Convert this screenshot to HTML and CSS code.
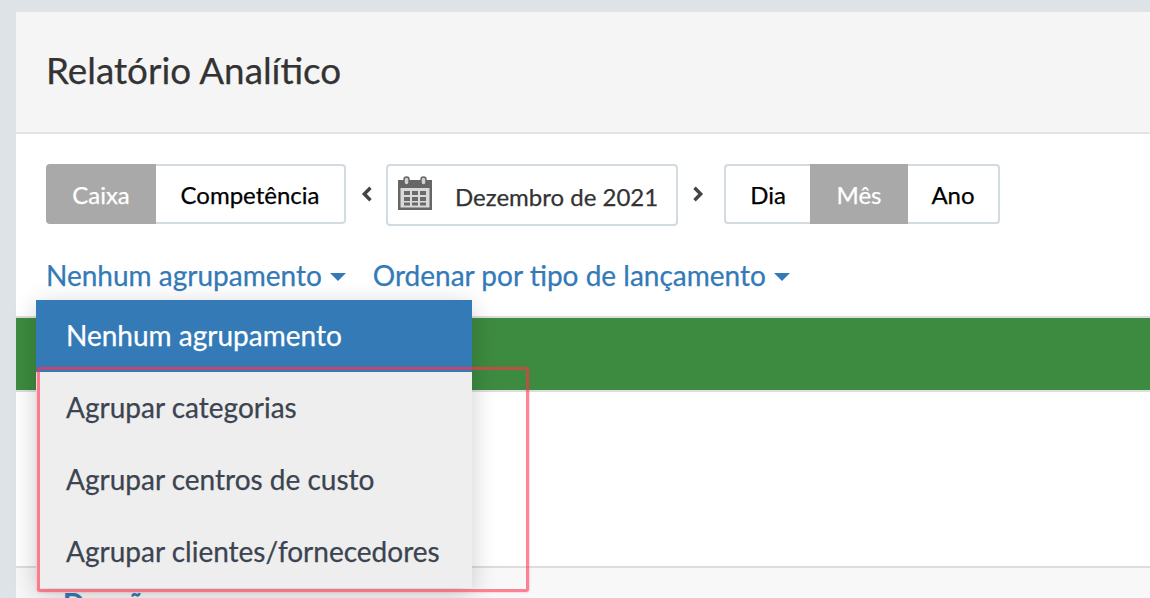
FILE: index.html
```html
<!DOCTYPE html>
<html lang="pt-BR">
<head>
<meta charset="utf-8">
<title>Relatório Analítico</title>
<link rel="stylesheet" href="styles.css">
</head>
<body>
<main class="card">
  <header class="card-head"><h1 class="title">Relatório Analítico</h1></header>
  <section class="toolbar">
    <div class="btn-group">
      <button class="seg seg-caixa active">Caixa</button>
      <button class="seg seg-comp">Competência</button>
    </div>
    <span class="arrow arrow-left">
      <svg width="12" height="16" viewBox="0 0 12 16"><path d="M9.500 1.800 3.300 8l6.200 6.200" fill="none" stroke="#444" stroke-width="3.400"/></svg>
    </span>
    <div class="date-box">
      <svg class="cal" width="36" height="34" viewBox="0 0 36 34">
        <path d="M1 4h34v30H1z" fill="#666"/>
        <path d="M3.500 12h29v19.500h-29z" fill="#d9d9d9"/>
        <rect x="7" y="1" width="5" height="8" rx="2.500" fill="#d0d0d0" stroke="#666" stroke-width="1.500"/>
        <rect x="24" y="1" width="5" height="8" rx="2.500" fill="#d0d0d0" stroke="#666" stroke-width="1.500"/>
        <path d="M7 15h6v4H7zM15 15h6v4h-6zM23 15h6v4h-6zM7 21h6v4H7zM15 21h6v4h-6zM23 21h6v4h-6zM7 26.500h6v3H7zM15 26.500h6v3h-6zM23 26.500h6v3h-6z" fill="#6a6a6a"/>
      </svg>
      <span class="date-text">Dezembro de 2021</span>
    </div>
    <span class="arrow arrow-right">
      <svg width="12" height="16" viewBox="0 0 12 16"><path d="M2.500 1.800 8.700 8l-6.200 6.200" fill="none" stroke="#444" stroke-width="3.400"/></svg>
    </span>
    <div class="btn-group">
      <button class="seg seg-dia">Dia</button>
      <button class="seg seg-mes active">Mês</button>
      <button class="seg seg-ano">Ano</button>
    </div>
  </section>
  <nav class="filters">
    <a class="filter">Nenhum agrupamento<i class="caret"></i></a>
    <a class="filter">Ordenar por tipo de lançamento<i class="caret"></i></a>
  </nav>
  <div class="green-bar"></div>
  <div class="blank"></div>
  <div class="footer-row"><span class="row-label">Doações</span></div>
</main>
<ul class="menu">
  <li class="menu-item selected">Nenhum agrupamento</li>
  <li class="menu-item">Agrupar categorias</li>
  <li class="menu-item">Agrupar centros de custo</li>
  <li class="menu-item">Agrupar clientes/fornecedores</li>
</ul>
<div class="highlight"></div>
</body>
</html>
```
FILE: styles.css
```css
* { box-sizing: border-box; }
html, body { margin: 0; height: 598px; overflow: hidden; }
body {
  position: relative;
  background: #dee3e7;
  padding: 12px 0 0 16px;
  font-family: Lato, "Open Sans", sans-serif;
  color: #333;
  -webkit-text-stroke: .25px;
}
.card {
  background: #fff;
  border-radius: 3px 0 0 0;
  height: 700px;
}
.card-head {
  height: 122px;
  background: #f5f5f5;
  border-bottom: 2px solid #e4e4e4;
  padding: 0 30px;
  display: flex;
  align-items: center;
}
.title {
  margin: 0 0 5px;
  font-size: 36.8px;
  font-weight: 400;
  color: #333;
}
.toolbar {
  display: flex;
  align-items: flex-start;
  padding: 30px 0 0 30px;
}
.btn-group { display: flex; }
.seg {
  height: 60px;
  font: 400 24px Lato, sans-serif;
  color: #000;
  background: #fff;
  border: 2px solid #d2dce0;
  padding: 0;
  -webkit-text-stroke: .25px;
}
.seg.active { background: #a9a9a9; border-color: #a9a9a9; color: #fff; }
.seg-caixa { width: 110px; border-radius: 4px 0 0 4px; }
.seg-comp { width: 190px; border-left: 0; border-radius: 0 4px 4px 0; }
.seg-dia { width: 86px; border-right: 0; border-radius: 4px 0 0 4px; }
.seg-mes { width: 98px; }
.seg-ano { width: 92px; border-left: 0; border-radius: 0 4px 4px 0; }
.arrow {
  width: 40px;
  height: 60px;
  display: flex;
  align-items: center;
  justify-content: center;
}
.arrow-left { padding-left: 2px; }
.arrow-right { width: 46px; padding-right: 6px; }
.date-box {
  width: 292px;
  height: 62px;
  border: 2px solid #d2dce0;
  border-radius: 4px;
  display: flex;
  align-items: center;
  padding-left: 9px;
  gap: 22px;
}
.cal { margin-top: -4px; flex: none; }
.date-text { font-size: 24px; color: #333; margin-top: 2px; }
.filters {
  display: flex;
  gap: 27px;
  padding: 31px 0 0 30px;
  height: 90px;
}
.filter {
  font-size: 28px;
  line-height: 36px;
  height: 36px;
  color: #337ab7;
  display: flex;
  align-items: center;
}
.caret {
  margin: 3px 0 0 8px;
  border-left: 8px solid transparent;
  border-right: 8px solid transparent;
  border-top: 8px solid #337ab7;
}
.green-bar {
  box-sizing: content-box;
  height: 72px;
  background: #3d8b40;
  border-top: 2px solid #ddd;
  border-bottom: 2px solid #ddd;
}
.blank { height: 174px; }
.footer-row {
  border-top: 2px solid #ddd;
  background: #f8f8f8;
  padding: 18px 0 0 47px;
}
.row-label { font-size: 28px; font-weight: 700; color: #337ab7; }
.menu {
  position: absolute;
  left: 36px;
  top: 300px;
  width: 436px;
  margin: 0;
  padding: 0;
  list-style: none;
  background: #eee;
  box-shadow: 0 6px 24px rgba(0,0,0,.2);
}
.menu-item {
  height: 72px;
  line-height: 71px;
  padding-left: 30px;
  font-size: 28px;
  color: #3b4450;
}
.menu-item.selected { background: #337ab7; color: #fff; }
.highlight {
  position: absolute;
  left: 37px;
  top: 367px;
  width: 492px;
  height: 225px;
  border: 3px solid rgba(255,50,80,.6);
  border-radius: 3px;
  box-shadow: 0 0 2px rgba(255,50,80,.5);
}
```
